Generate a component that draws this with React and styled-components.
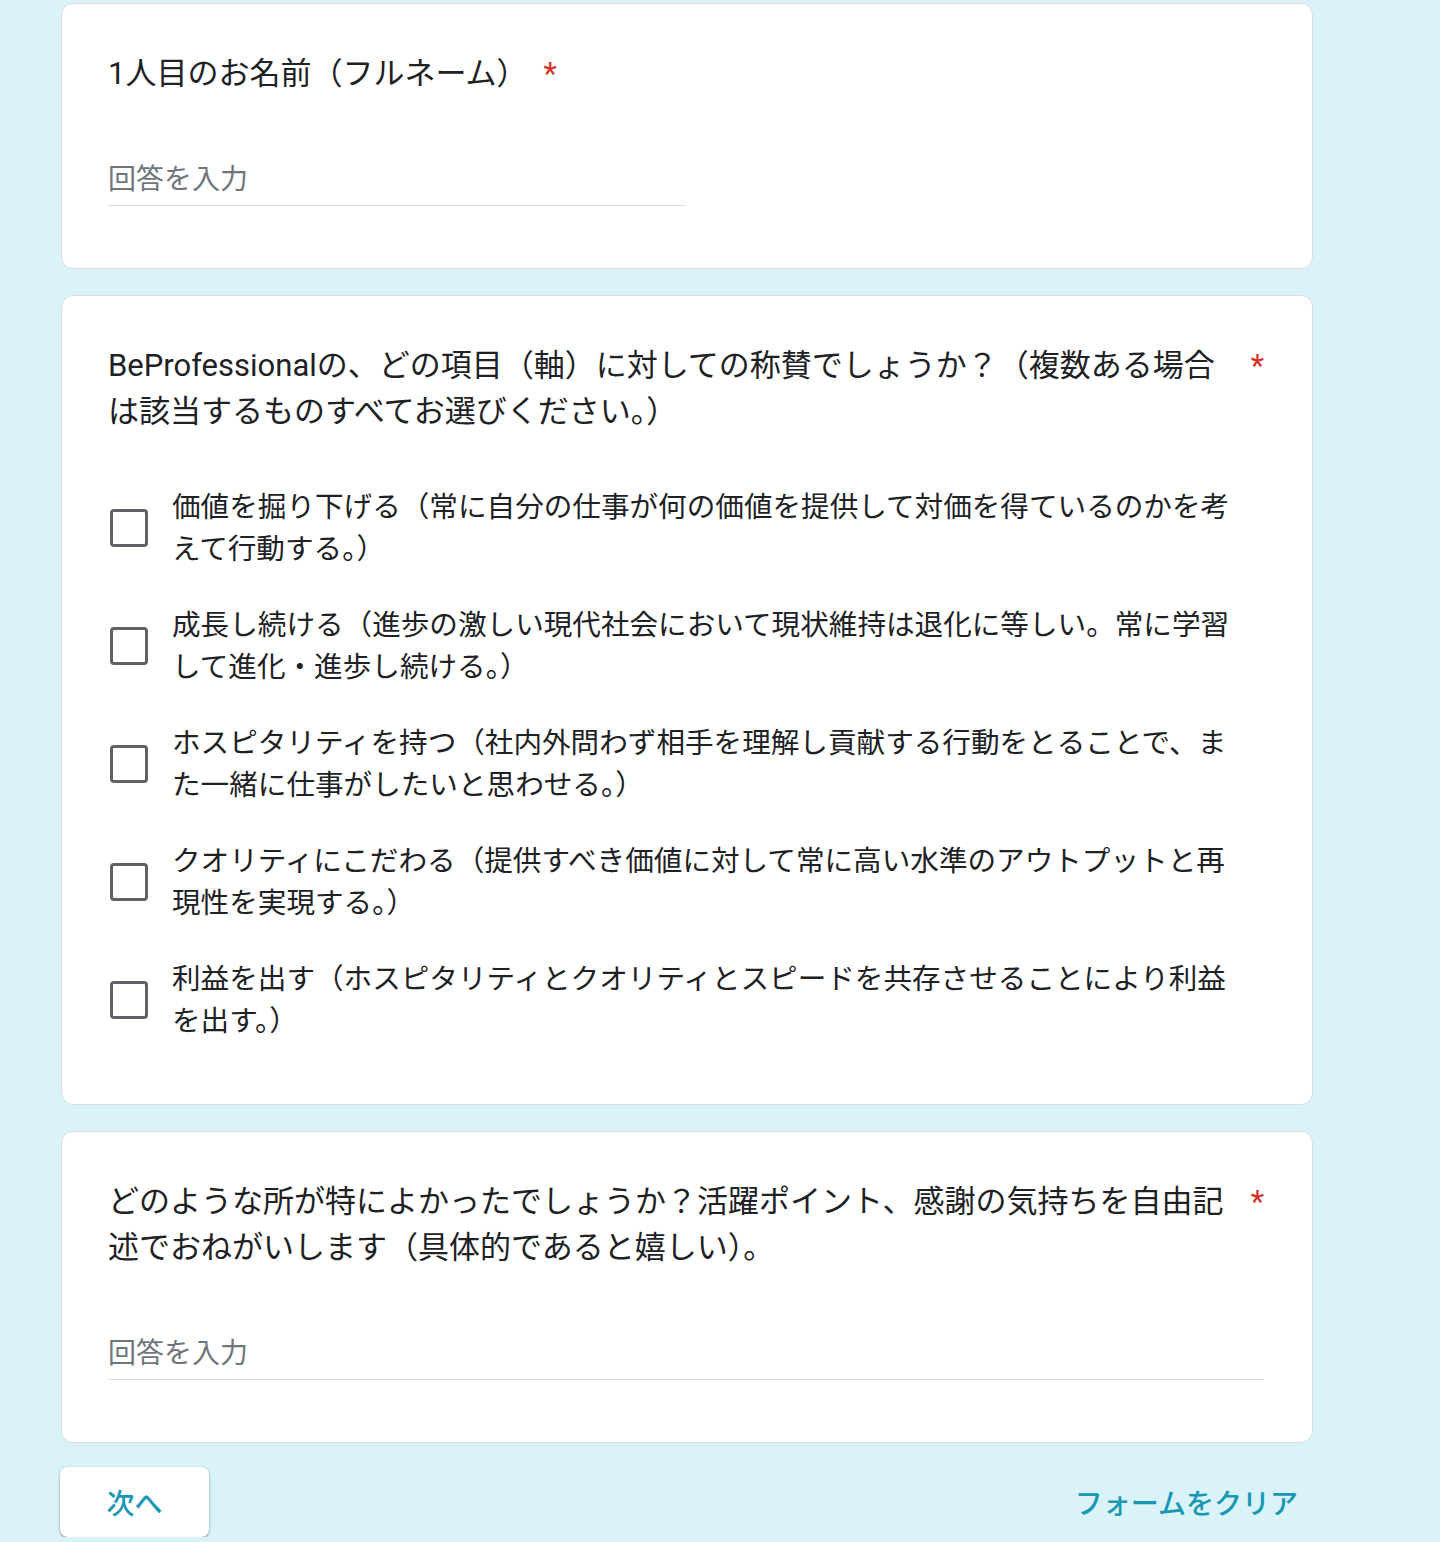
import React from "react";
import { styled, createGlobalStyle } from "styled-components";

const questions = [
  "価値を掘り下げる（常に自分の仕事が何の価値を提供して対価を得ているのかを考えて行動する。）",
  "成長し続ける（進歩の激しい現代社会において現状維持は退化に等しい。常に学習して進化・進歩し続ける。）",
  "ホスピタリティを持つ（社内外問わず相手を理解し貢献する行動をとることで、また一緒に仕事がしたいと思わせる。）",
  "クオリティにこだわる（提供すべき価値に対して常に高い水準のアウトプットと再現性を実現する。）",
  "利益を出す（ホスピタリティとクオリティとスピードを共存させることにより利益を出す。）",
];

const App = () => {
  return (
    <>
      <GlobalStyle />
      <Page>
        <Card>
          <TitleRow>
            <TitleText>1人目のお名前（フルネーム）</TitleText>
            <Required>*</Required>
          </TitleRow>
          <TextInput placeholder="回答を入力" />
        </Card>

        <Card>
          <TitleRow>
            <TitleText>
              BeProfessionalの、どの項目（軸）に対しての称賛でしょうか？（複数ある場合は該当するものすべてお選びください。）
            </TitleText>
            <Required>*</Required>
          </TitleRow>
          <OptionList>
            {questions.map((q) => (
              <Option key={q}>
                <Box role="checkbox" aria-checked="false" />
                <OptionLabel>{q}</OptionLabel>
              </Option>
            ))}
          </OptionList>
        </Card>

        <Card>
          <TitleRow>
            <TitleText>
              どのような所が特によかったでしょうか？活躍ポイント、感謝の気持ちを自由記述でおねがいします（具体的であると嬉しい）。
            </TitleText>
            <Required>*</Required>
          </TitleRow>
          <TextInput $full placeholder="回答を入力" />
        </Card>

        <Footer>
          <NextButton>次へ</NextButton>
          <ClearButton>フォームをクリア</ClearButton>
        </Footer>
      </Page>
    </>
  );
};

export default App;

const GlobalStyle = createGlobalStyle`
  body {
    margin: 0;
    background-color: #d9f3f8;
    font-family: "Roboto", "Noto Sans CJK JP", sans-serif;
    color: #202124;
  }
`;

const Page = styled.div`
  width: 1252px;
  margin-left: 61px;
  padding-top: 3px;
`;

const Card = styled.div`
  background-color: #fff;
  border: 1px solid #dadce0;
  border-radius: 12px;
  padding: 47px 48px 62px 46px;
  margin-bottom: 26px;
`;

const TitleRow = styled.div`
  display: flex;
  align-items: flex-start;
  font-size: 31px;
  line-height: 46px;
  color: #202124;
`;

const TitleText = styled.div`
  flex: 0 1 auto;
`;

const Required = styled.span`
  flex-shrink: 0;
  color: #d93025;
  margin-left: 16px;
`;

const TextInput = styled.input`
  display: block;
  box-sizing: border-box;
  margin-top: 56px;
  width: ${(p) => (p.$full ? "100%" : "50%")};
  height: 53px;
  padding: 0;
  border: none;
  border-bottom: 1px solid #dadce0;
  background: transparent;
  font-family: inherit;
  font-size: 28px;
  color: #202124;
  outline: none;
  &::placeholder {
    color: #70757a;
  }
`;

const OptionList = styled.div`
  display: flex;
  flex-direction: column;
  gap: 34px;
  margin-top: 51px;
`;

const Option = styled.div`
  display: flex;
  align-items: center;
  gap: 24px;
`;

const Box = styled.div`
  flex-shrink: 0;
  box-sizing: border-box;
  width: 38px;
  height: 38px;
  margin-left: 2px;
  border: 3.5px solid #5f6368;
  border-radius: 4px;
`;

const OptionLabel = styled.div`
  font-size: 28.6px;
  line-height: 42px;
  padding-right: 22px;
  color: #202124;
`;

const Footer = styled.div`
  display: flex;
  justify-content: space-between;
  align-items: center;
  margin-top: -2px;
  margin-left: -1px;
`;

const NextButton = styled.button`
  width: 149px;
  height: 70px;
  border: none;
  border-radius: 8px;
  background-color: #fff;
  box-shadow: 0 1px 3px rgba(60, 64, 67, 0.4), 0 2px 2px rgba(60, 64, 67, 0.15);
  font-family: inherit;
  font-size: 28px;
  font-weight: 500;
  color: #1a97b3;
  cursor: pointer;
`;

const ClearButton = styled.button`
  border: none;
  background: transparent;
  padding: 0 15px;
  height: 70px;
  font-family: inherit;
  font-size: 28px;
  font-weight: 500;
  color: #1a97b3;
  cursor: pointer;
`;
